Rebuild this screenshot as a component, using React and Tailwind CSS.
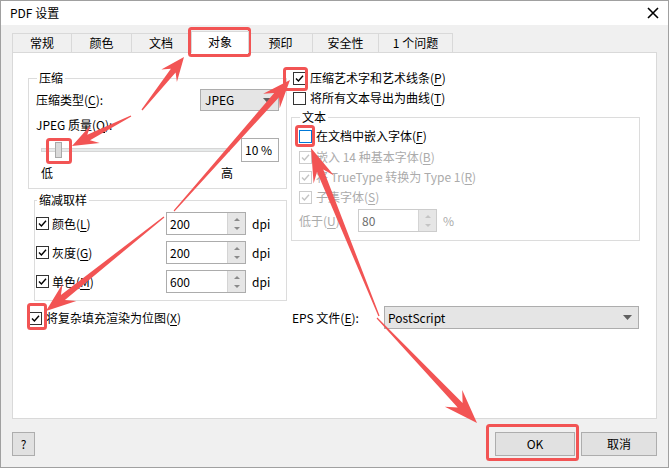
import React from "react";

const RED = "#f25454";

const Acc = ({ children }) => <span className="underline underline-offset-[2px]">{children}</span>;

const Check = ({ checked, disabled, focus }) => (
  <span
    className={
      "w-[13px] h-[13px] border bg-white flex items-center justify-center shrink-0 " +
      (disabled ? "border-[#cccccc]" : focus ? "border-[#0078d7]" : "border-[#333333]")
    }
  >
    {checked && (
      <svg width="9" height="9" viewBox="0 0 9 9">
        <path d="M1 4.6 L3.4 7 L8 1.8" fill="none" stroke={disabled ? "#c4c4c4" : "#000"} strokeWidth="1.4" />
      </svg>
    )}
  </span>
);

const CheckRow = ({ checked, disabled, focus, className = "", children }) => (
  <div className={"flex items-center h-[16px] gap-[4px] " + className}>
    <Check checked={checked} disabled={disabled} focus={focus} />
    <span className={disabled ? "text-[#ababab]" : ""}>{children}</span>
  </div>
);

const Caret = ({ color = "#606060" }) => (
  <svg width="9" height="5" viewBox="0 0 9 5">
    <path d="M0 0 H9 L4.5 5 Z" fill={color} />
  </svg>
);

const Spin = ({ value, disabled, width = "w-[80px]" }) => (
  <div className={"h-[23px] border bg-white flex " + width + (disabled ? " border-[#cccccc]" : " border-[#acacac]")}>
    <span className={"flex-1 pl-[3px] flex items-center " + (disabled ? "text-[#6d6d6d]" : "")}>{value}</span>
    <span className="w-[18px] bg-[#e6e6e6] border-l border-[#d4d4d4] flex flex-col items-center justify-center gap-[6px]">
      <svg width="6" height="3" viewBox="0 0 6 3">
        <path d="M0 3 L3 0 L6 3 Z" fill={disabled ? "#c4c4c4" : "#8a8a8a"} />
      </svg>
      <svg width="6" height="3" viewBox="0 0 6 3">
        <path d="M0 0 L3 3 L6 0 Z" fill={disabled ? "#c4c4c4" : "#8a8a8a"} />
      </svg>
    </span>
  </div>
);

const tabs = [
  { label: "常规", w: "w-[60px]" },
  { label: "颜色", w: "w-[61px]" },
  { label: "文档", w: "w-[60px]" },
  { label: "对象", w: "w-[58px]", active: true },
  { label: "预印", w: "w-[65px]" },
  { label: "安全性", w: "w-[67px]" },
  { label: "1 个问题", w: "w-[75px]" },
];

const arrowPts = (t, p, H, W, s) => {
  const dx = p[0] - t[0];
  const dy = p[1] - t[1];
  const L = Math.hypot(dx, dy);
  const ux = dx / L;
  const uy = dy / L;
  const nx = -uy;
  const ny = ux;
  const bx = p[0] - ux * H;
  const by = p[1] - uy * H;
  const mx = p[0] - ux * H * 0.72;
  const my = p[1] - uy * H * 0.72;
  const pts = [
    [t[0] + nx * 0.6, t[1] + ny * 0.6],
    [mx + nx * s, my + ny * s],
    [bx + nx * W, by + ny * W],
    [p[0], p[1]],
    [bx - nx * W, by - ny * W],
    [mx - nx * s, my - ny * s],
    [t[0] - nx * 0.6, t[1] - ny * 0.6],
  ];
  return pts.map((q) => q[0].toFixed(1) + "," + q[1].toFixed(1)).join(" ");
};

const arrows = [
  { t: [142, 110], p: [184, 57], H: 24, W: 10, s: 3 },
  { t: [131, 116], p: [72, 146], H: 26, W: 10, s: 3 },
  { t: [174, 211], p: [290, 80], H: 28, W: 11, s: 3.2 },
  { t: [164, 217], p: [46, 311], H: 30, W: 11, s: 3.2 },
  { t: [379, 316], p: [311, 148], H: 34, W: 11, s: 3.4 },
  { t: [377, 318], p: [477, 423], H: 34, W: 12, s: 3.4 },
];

const boxes = [
  [189.5, 28.5, 60, 27],
  [47.5, 139.5, 23, 23],
  [284.5, 68.5, 22, 21],
  [296.5, 126.5, 17, 19],
  [28.5, 304.5, 17, 24],
  [487.5, 425.5, 90, 34],
];

export default function App() {
  return (
    <div className="relative w-[669px] h-[468px] bg-[#f0f0f0] border border-[#a0a0a0] overflow-hidden text-[12px] leading-[16px] text-black font-['Noto_Sans_CJK_SC','Noto_Sans',sans-serif]">
      {/* title bar */}
      <div className="h-[24px] bg-white flex items-center justify-between pl-[9px] pr-[9px]">
        <span>PDF 设置</span>
        <svg width="12" height="12" viewBox="0 0 12 12">
          <path d="M1 1 L11 11 M11 1 L1 11" stroke="#000" strokeWidth="1.6" />
        </svg>
      </div>

      {/* tabs */}
      <div className="mt-[6px] pl-[11px] flex items-end h-[21px]">
        {tabs.map((t) =>
          t.active ? (
            <div
              key={t.label}
              className={"relative z-10 h-[22px] mb-[-1px] bg-white border border-b-0 border-[#d9d9d9] flex items-center justify-center pb-[1px] " + t.w}
            >
              {t.label}
            </div>
          ) : (
            <div
              key={t.label}
              className={"h-[19px] bg-[#f0f0f0] border border-b-0 border-[#d9d9d9] -ml-px first:ml-0 flex items-center justify-center " + t.w}
            >
              {t.label}
            </div>
          )
        )}
      </div>

      {/* panel */}
      <div className="ml-[11px] w-[645px] h-[367px] bg-white border border-[#d9d9d9] flex pl-[15px] pt-[17px]">
        {/* left column */}
        <div className="w-[259px] flex flex-col">
          <fieldset className="h-[119px] border border-[#dcdcdc]">
            <legend className="ml-[8px] px-[2px] leading-[16px]">压缩</legend>
            <div className="mt-[3px] h-[22px] flex items-center justify-between pl-[7px] pr-[7px]">
              <span>
                压缩类型(<Acc>C</Acc>):
              </span>
              <div className="w-[79px] h-[22px] border border-[#adadad] bg-[#e5e5e5] flex items-center justify-between pl-[4px] pr-[6px]">
                <span>JPEG</span>
                <Caret />
              </div>
            </div>
            <div className="mt-[6px] pl-[7px] h-[16px]">
              JPEG 质量(<Acc>Q</Acc>):
            </div>
            <div className="mt-[5px] h-[24px] flex items-center pl-[12px]">
              <div className="relative w-[189px] h-[4px] bg-[#e7eaea] border border-[#d6d6d6]">
                <span className="absolute left-[13px] top-[-7px] w-[7px] h-[16px] bg-[#dadada] border border-[#a9a9a9]" />
              </div>
              <div className="ml-[11px] w-[38px] h-[24px] border border-[#adadad] flex items-center pl-[3px]">10 %</div>
            </div>
            <div className="mt-[3px] h-[16px] flex justify-between pl-[12px] pr-[53px]">
              <span>低</span>
              <span>高</span>
            </div>
          </fieldset>

          <fieldset className="mt-[3px] ml-[6px] w-[253px] h-[109px] border border-[#dcdcdc]">
            <legend className="ml-[2px] px-[2px] leading-[16px]">缩减取样</legend>
            <div className="mt-[4px] flex flex-col gap-[6px] pl-[1px]">
              {[
                ["颜色", "L", "200"],
                ["灰度", "G", "200"],
                ["单色", "M", "600"],
              ].map(([n, k, v]) => (
                <div key={n} className="h-[23px] flex items-center">
                  <div className="w-[130px] flex items-center gap-[3px]">
                    <Check checked />
                    <span>
                      {n}(<Acc>{k}</Acc>)
                    </span>
                  </div>
                  <Spin value={v} />
                  <span className="ml-[6px]">dpi</span>
                </div>
              ))}
            </div>
          </fieldset>

          <CheckRow checked className="mt-[9px] pl-[1px]">
            将复杂填充渲染为位图(<Acc>X</Acc>)
          </CheckRow>
        </div>

        {/* right column */}
        <div className="ml-[4px] w-[349px] flex flex-col">
          <CheckRow checked className="pl-[2px]">
            压缩艺术字和艺术线条(<Acc>P</Acc>)
          </CheckRow>
          <CheckRow className="mt-[4px] pl-[2px] gap-[3px]">
            将所有文本导出为曲线(<Acc>T</Acc>)
          </CheckRow>

          <fieldset className="mt-[3px] h-[132px] border border-[#dcdcdc]">
            <legend className="ml-[8px] px-[2px] leading-[16px]">文本</legend>
            <div className="pl-[7px] flex flex-col">
              <CheckRow focus className="mt-[3px] gap-[3px]">
                在文档中嵌入字体(<Acc>F</Acc>)
              </CheckRow>
              <CheckRow checked disabled className="mt-[5px]">
                嵌入 14 种基本字体(<Acc>B</Acc>)
              </CheckRow>
              <CheckRow checked disabled className="mt-[4px]">
                将 TrueType 转换为 Type 1(<Acc>R</Acc>)
              </CheckRow>
              <CheckRow checked disabled className="mt-[4px]">
                子集字体(<Acc>S</Acc>)
              </CheckRow>
              <div className="mt-[4px] h-[23px] flex items-center">
                <span className="w-[59px] text-[#ababab]">
                  低于(<Acc>U</Acc>):
                </span>
                <Spin value="80" disabled width="w-[79px]" />
                <span className="ml-[6px] text-[#ababab]">%</span>
              </div>
            </div>
          </fieldset>

          <div className="mt-[65px] h-[23px] flex items-center">
            <span className="w-[93px] pl-[1px]">
              EPS 文件(<Acc>E</Acc>):
            </span>
            <div className="w-[255px] h-[23px] border border-[#adadad] bg-[#e5e5e5] flex items-center justify-between pl-[3px] pr-[6px]">
              <span>PostScript</span>
              <Caret />
            </div>
          </div>
        </div>
      </div>

      {/* buttons */}
      <div className="mt-[13px] pl-[11px] pr-[11px] flex items-center">
        <button className="w-[23px] h-[24px] bg-[#e1e1e1] border border-[#adadad] text-[12px]">?</button>
        <div className="ml-auto flex gap-[6px]">
          <button className="w-[80px] h-[24px] bg-[#e1e1e1] border border-[#adadad]">OK</button>
          <button className="w-[76px] h-[24px] bg-[#e1e1e1] border border-[#adadad]">取消</button>
        </div>
      </div>

      {/* annotations */}
      <svg
        className="absolute left-[-1px] top-[-1px] pointer-events-none"
        width="669"
        height="468"
        viewBox="0 0 669 468"
      >
        {boxes.map(([x, y, w, h], i) => (
          <rect key={i} x={x} y={y} width={w} height={h} rx="2" fill="none" stroke={RED} strokeWidth="3" />
        ))}
        {arrows.map((a, i) => (
          <polygon key={i} points={arrowPts(a.t, a.p, a.H, a.W, a.s)} fill={RED} />
        ))}
      </svg>
    </div>
  );
}
